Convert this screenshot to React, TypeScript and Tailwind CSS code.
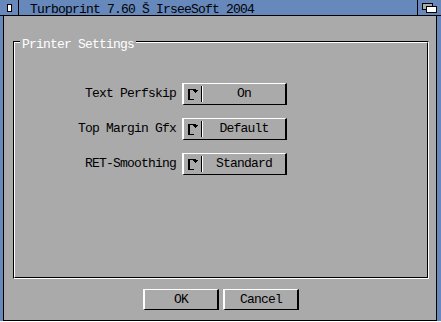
import React from 'react';

const ROWS = [
  { label: 'Text Perfskip', value: 'On' },
  { label: 'Top Margin Gfx', value: 'Default' },
  { label: 'RET-Smoothing', value: 'Standard' },
];

function CycleGadget({ value }: { value: string }) {
  return (
    <div className="flex h-[22px] w-[105px] border-y border-x-2 border-t-white border-l-white border-b-black border-r-black">
      <svg width="19" height="20" viewBox="0 0 19 20" shapeRendering="crispEdges" className="shrink-0">
        <rect x="4" y="5" width="2" height="11" fill="#000" />
        <rect x="4" y="5" width="8" height="1" fill="#000" />
        <rect x="4" y="15" width="6" height="1" fill="#000" />
        <polygon points="9,6 14,6 11.5,9" fill="#000" />
        <rect x="17" y="2" width="1" height="16" fill="#000" />
        <rect x="18" y="2" width="1" height="16" fill="#fff" />
      </svg>
      <span className="flex-1 text-center leading-[20px]">{value}</span>
    </div>
  );
}

function Button({ children }: { children: React.ReactNode }) {
  return (
    <div className="h-[21px] w-[76px] border-y border-x-2 border-t-white border-l-white border-b-black border-r-black text-center leading-[19px]">
      {children}
    </div>
  );
}

export default function App() {
  return (
    <div className="flex h-[322px] w-[441px] flex-col bg-[#6688bb] font-['Liberation_Mono',monospace] text-[13px] tracking-[-0.8px] text-black">
      {/* title bar */}
      <div className="flex h-[16px] border-b border-black">
        <div className="w-[19px] border-r border-black">
          <svg width="18" height="15" viewBox="0 0 18 15" shapeRendering="crispEdges">
            <rect x="7.5" y="4.5" width="4" height="7" fill="#fff" stroke="#000" />
          </svg>
        </div>
        <div className="flex-1 whitespace-nowrap pl-[11px] pt-[3px] leading-[13px]">
          Turboprint 7.60 Š IrseeSoft 2004
        </div>
        <div className="w-[24px] border-l border-black">
          <svg width="23" height="15" viewBox="0 0 23 15" shapeRendering="crispEdges">
            <rect x="4.5" y="3.5" width="10" height="6" fill="#aaaaaa" stroke="#000" />
            <rect x="8.5" y="6.5" width="10" height="6" fill="#fff" stroke="#000" />
          </svg>
        </div>
      </div>

      <div className="flex flex-1">
        <div className="w-[3px]" />
        <div className="flex flex-1 flex-col border-x border-b border-black bg-[#aaaaaa]">
          {/* group box */}
          <div className="relative ml-[9px] mr-[7px] mt-[25px] h-[238px] border border-t-black border-l-black border-b-white border-r-white">
            <div className="flex h-full flex-col gap-[13px] border border-t-white border-l-white border-b-black border-r-black pt-[40px]">
              {ROWS.map((r) => (
                <div key={r.label} className="flex items-center">
                  <span className="w-[161px] whitespace-nowrap text-right leading-[22px]">{r.label}</span>
                  <div className="ml-[6px]">
                    <CycleGadget value={r.value} />
                  </div>
                </div>
              ))}
            </div>
            <span className="absolute -top-[4px] left-[6px] whitespace-nowrap bg-[#aaaaaa] px-[2px] leading-[13px] text-white">
              Printer Settings
            </span>
          </div>

          <div className="ml-[2px] mt-[10px] flex justify-center gap-[4px]">
            <Button>OK</Button>
            <Button>Cancel</Button>
          </div>
        </div>
        <div className="w-[4px]" />
      </div>
      <div className="h-[1px] bg-white" />
    </div>
  );
}
